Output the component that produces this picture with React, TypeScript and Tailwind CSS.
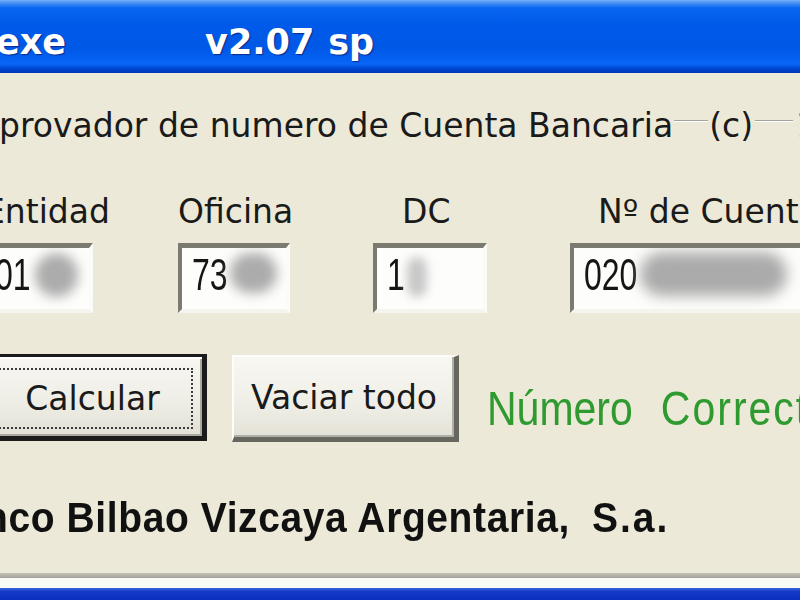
import React from "react";

type FieldProps = {
  value: string;
  blob: string;
};

function Field({ value, blob }: FieldProps) {
  return (
    <div className="relative mt-[15px] h-[70px] w-full border-t-[5px] border-l-[4px] border-r-[4px] border-b-[4px] border-t-[#7b7a71] border-l-[#7b7a71] border-r-[#fbfbf7] border-b-[#f5f4ee] bg-[#fdfdfb] flex items-end pb-[12px] pl-[10px] overflow-hidden">
      <span className="inline-block origin-bottom scale-y-[1.4] font-['Liberation_Sans',Arial,sans-serif] text-[32px] leading-none text-[#151515]">
        {value}
      </span>
      <div className={blob} />
    </div>
  );
}

export default function App() {
  return (
    <div className="w-[800px] h-[600px] overflow-hidden bg-[#ece9d8] flex flex-col text-[#1a1a1a] font-['DejaVu_Sans',sans-serif]">
      {/* Title bar */}
      <div className="h-[73px] shrink-0 flex items-start pt-[25px] whitespace-pre text-white font-bold text-[35px] leading-none bg-[linear-gradient(to_bottom,#75aefa_0px,#3a89f3_4px,#0866f0_8px,#005ae9_24px,#0058e6_48px,#0562f2_60px,#0a68f6_64px,#0049d6_68px,#0034b4_73px)] [text-shadow:1px_1px_1px_#0a2c8c]">
        <span className="-ml-[4px]">exe</span>
        <span className="ml-[139px]">v2.07</span>
        <span className="ml-[14px]">sp</span>
      </div>

      {/* Heading / group line */}
      <div className="mt-[36px] h-[33px] flex items-start whitespace-nowrap text-[33px] leading-none">
        <span className="-ml-[1px]">provador de numero de Cuenta Bancaria</span>
        <div className="mt-[11px] ml-[1px] h-[2px] w-[34px] shrink-0 border-t border-b border-t-[#a3a29b] border-b-white" />
        <span className="ml-[1px]">(c)</span>
        <div className="mt-[11px] ml-[2px] h-[2px] w-[38px] shrink-0 border-t border-b border-t-[#a3a29b] border-b-white" />
        <span className="ml-[3px]">1998</span>
      </div>

      {/* Labels + inputs */}
      <div className="mt-[53px] flex items-start whitespace-nowrap text-[33px] leading-none">
        <div className="-ml-[19px] w-[112px] shrink-0 flex flex-col">
          <div className="h-[33px] pl-[3px]">Entidad</div>
          <Field value="01" blob="absolute left-[50px] top-[5px] w-[43px] h-[44px] rounded-full bg-[#acacac] blur-[6px]" />
        </div>
        <div className="ml-[85px] w-[112px] shrink-0 flex flex-col">
          <div className="h-[33px]">Oficina</div>
          <Field value="73" blob="absolute left-[48px] top-[5px] w-[47px] h-[40px] rounded-full bg-[#acacac] blur-[6px]" />
        </div>
        <div className="ml-[83px] w-[114px] shrink-0 flex flex-col">
          <div className="h-[33px] pl-[29px]">DC</div>
          <Field value="1" blob="absolute left-[30px] top-[9px] w-[20px] h-[40px] rounded-full bg-[#c8c8c8] blur-[5px]" />
        </div>
        <div className="ml-[83px] w-[260px] shrink-0 flex flex-col">
          <div className="h-[33px] pl-[28px]">Nº de Cuenta</div>
          <Field value="020" blob="absolute left-[66px] top-[4px] w-[147px] h-[44px] rounded-[22px] bg-[#ababab] blur-[7px]" />
        </div>
      </div>

      {/* Buttons + result */}
      <div className="mt-[41px] h-[87px] flex items-start whitespace-nowrap">
        <div className="-ml-[20px] w-[227px] h-[87px] shrink-0 flex border-t-[3px] border-l-[3px] border-r-[5px] border-b-[5px] border-[#1b1b1b] bg-[linear-gradient(to_bottom,#f7f6f1,#eeede5_60%,#e2e0d4)] shadow-[inset_2px_2px_0_#ffffff,inset_-2px_-2px_0_#aaa99f] pt-[11px] pr-[9px] pb-[7px] pl-[9px]">
          <div className="flex-1 flex items-center justify-center border-2 border-dotted border-[#3c3c3c] text-[33px] leading-none">
            Calcular
          </div>
        </div>
        <div className="ml-[25px] mt-[1px] w-[227px] h-[87px] shrink-0 flex items-center justify-center border-t-2 border-l-2 border-r-[5px] border-b-[5px] border-t-[#fdfdfb] border-l-[#fdfdfb] border-r-[#67665f] border-b-[#67665f] bg-[linear-gradient(to_bottom,#f8f7f2,#efeee6_60%,#e4e2d7)] shadow-[inset_-2px_-2px_0_#b0afa6] text-[33px] leading-none">
          Vaciar todo
        </div>
        <div className="ml-[28px] mt-[38px] flex origin-bottom scale-y-[1.15] font-['Liberation_Sans',Arial,sans-serif] text-[41px] leading-none text-[#2f9a2f]">
          <span>Número</span>
          <span className="ml-[28px] tracking-[2px]">Correcto</span>
        </div>
      </div>

      {/* Bank name */}
      <div className="mt-[58px] -ml-[16px] flex whitespace-pre origin-bottom scale-y-[1.08] font-['Liberation_Sans',Arial,sans-serif] font-bold text-[39px] leading-none tracking-[0.6px] text-[#111]">
        <span>nco Bilbao Vizcaya Argentaria,</span>
        <span className="ml-[22px] tracking-[2px]">S.a.</span>
      </div>

      {/* Bottom edge */}
      <div className="mt-auto shrink-0 flex flex-col">
        <div className="h-[5px] bg-[linear-gradient(to_bottom,#c4c2b8,#a3a19a)]" />
        <div className="h-[10px] bg-[#fafaf4]" />
        <div className="h-[12px] bg-[linear-gradient(to_bottom,#3d66e0,#1239c8_30%,#0a2fbd)]" />
      </div>
    </div>
  );
}
